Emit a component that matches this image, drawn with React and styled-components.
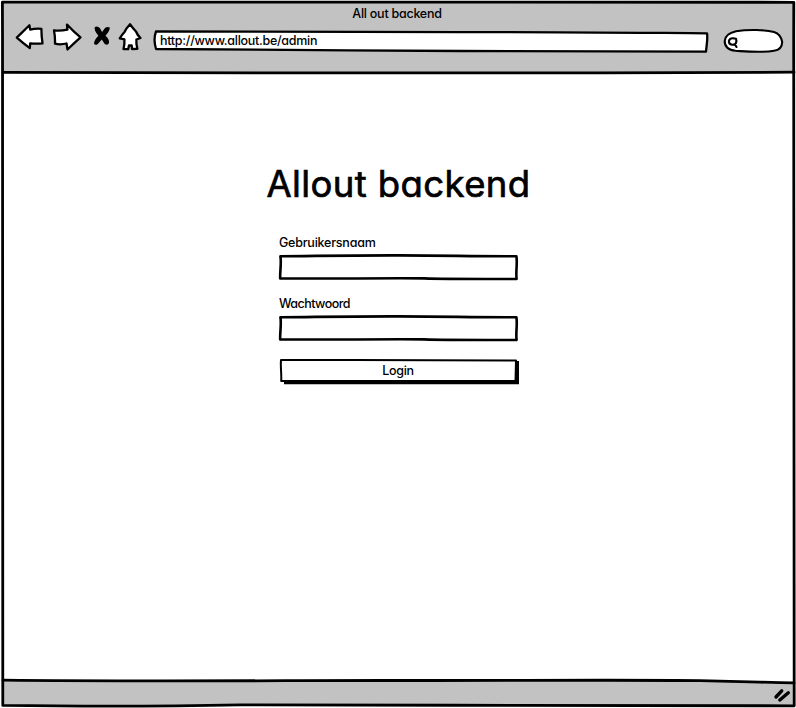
import React from "react";
import styled, { createGlobalStyle } from "styled-components";

const GlobalStyle = createGlobalStyle`
  * { box-sizing: border-box; }
  body { margin: 0; background: #fff; overflow: hidden; }
`;

const ink = "#000";
const chrome = "#c2c2c2";

const Window = styled.div`
  position: relative;
  width: 796px;
  height: 708px;
  display: grid;
  grid-template-rows: 72px 1fr 27px;
  padding: 1px 2px 2px 2px;
  background: #fff;
  color: ${ink};
  font: 500 12.5px/16px Inter, "Open Sans", sans-serif;
  font-feature-settings: "cv11", "ss03";
`;

/* Hand-drawn outline laid over the element that it frames */
const Outline = styled.svg`
  position: absolute;
  inset: 0;
  width: 100%;
  height: 100%;
  overflow: visible;
  pointer-events: none;
  fill: ${(p) => p.$fill || "none"};
  stroke: ${ink};
  stroke-width: ${(p) => p.$weight || 2.6};
  stroke-linejoin: round;
  stroke-linecap: round;
`;

const Header = styled.header`
  background: ${chrome};
  display: grid;
  grid-template-rows: 20px 1fr;
`;

const WindowTitle = styled.div`
  text-align: center;
  padding-top: 5px;
  padding-right: 2px;
  letter-spacing: -0.25px;
`;

const Toolbar = styled.div`
  display: flex;
  align-items: flex-start;
  padding-left: 12px;
`;

const NavButton = styled.button`
  all: unset;
  box-sizing: border-box;
  width: ${(p) => p.$width}px;
  height: 32px;
  margin-right: ${(p) => p.$gap}px;
`;

const Glyph = styled.svg`
  display: block;
  width: 100%;
  height: 100%;
  fill: #fff;
  stroke: ${ink};
  stroke-width: 2.3;
  stroke-linejoin: round;
  stroke-linecap: round;
`;

const AddressBar = styled.div`
  position: relative;
  width: 555px;
  height: 22px;
  margin-top: 9px;
  padding: 3px 0 0 7px;
`;

const AddressText = styled.span`
  position: relative;
  display: block;
  letter-spacing: -0.28px;
`;

const SearchBox = styled.div`
  position: relative;
  width: 61px;
  height: 24px;
  margin: 8px 0 0 15px;
`;

const Page = styled.main`
  display: flex;
  flex-direction: column;
  align-items: center;
  padding-top: 85px;
`;

const Heading = styled.h1`
  margin: 0;
  padding-left: 1px;
  font-size: 36.5px;
  line-height: 52px;
  font-weight: 400;
  letter-spacing: 0.4px;
  white-space: nowrap;
  -webkit-text-stroke: 0.7px ${ink};
`;

const Form = styled.form`
  width: 238px;
  padding-top: 25px;
  display: flex;
  flex-direction: column;
`;

const Field = styled.label`
  display: flex;
  flex-direction: column;
  height: 61px;
`;

const FieldName = styled.span`
  height: 19px;
  letter-spacing: ${(p) => p.$spacing};
`;

const InputFrame = styled.span`
  position: relative;
  display: block;
  height: 26px;
`;

const Input = styled.input`
  width: 100%;
  height: 100%;
  padding: 0 6px;
  border: 0;
  outline: 0;
  background: transparent;
  font: inherit;
`;

const LoginButton = styled.button`
  all: unset;
  position: relative;
  display: flex;
  justify-content: center;
  height: 26px;
  margin-top: 1px;
  padding-top: 5px;
  box-sizing: border-box;
  line-height: 16px;
  letter-spacing: -0.3px;
`;

const ButtonText = styled.span`
  position: relative;
`;

/* The top edge dips towards the right, as the line drawn along it does */
const Footer = styled.footer`
  background: ${chrome};
  clip-path: polygon(0 1px, 88% 1px, 100% 4px, 100% 100%, 0 100%);
  display: flex;
  justify-content: flex-end;
  padding: 9px 3px 0 0;
`;

const Grip = styled.svg`
  width: 18px;
  height: 16px;
  stroke: ${ink};
  stroke-width: 3.4;
  stroke-linecap: round;
  fill: none;
`;

function TextField({ name, label, spacing, type }) {
  return (
    <Field>
      <FieldName $spacing={spacing}>{label}</FieldName>
      <InputFrame>
        <Input name={name} type={type} />
        <Outline viewBox="0 0 238 26" $weight={2.6}>
          <path d="M1.4 2.3 C40 2 65 1.3 120 1.4 S190 2.5 237.4 2.3 C238.6 10 236.6 17 237.6 25 C190 25 170 25.2 145 24.4 C100 24 45 25 1.2 24.4 C.8 18 2.6 9 1.4 2.3Z" />
        </Outline>
      </InputFrame>
    </Field>
  );
}

export default function App() {
  return (
    <>
      <GlobalStyle />
      <Window>
        <Header>
          <WindowTitle>All out backend</WindowTitle>
          <Toolbar>
            <NavButton $width={30} $gap={8} aria-label="Back">
              <Glyph viewBox="14 21 30 32">
                <path d="M16.8 37.6 L29.4 25.2 L30.2 29.6 Q35 28.4 41.4 28.8 Q41.4 36 42.5 43.4 Q36 44 30.2 43.4 L29.8 48.2 Q23 43 16.8 37.6Z" />
              </Glyph>
            </NavButton>
            <NavButton $width={30} $gap={10} aria-label="Forward">
              <Glyph viewBox="52 21 30 32">
                <path d="M54 30.4 Q60 31.3 67.4 29.7 L67 24.6 Q73 31.3 80.5 37.3 Q73.4 43.7 67.5 49.5 L66.5 43.5 Q60 45 55 43.6 Q55.2 36.5 54 30.4Z" />
              </Glyph>
            </NavButton>
            <NavButton $width={20} $gap={6} aria-label="Stop">
              <Glyph viewBox="92 21 20 32">
                <path fill={ink} stroke="none" d="M94.8 27 Q97.5 25.5 99.8 28 L102.1 32 L105 28 Q107.5 26 109.8 27.6 Q110 31 105.5 35.7 Q109.5 39 109 43 Q107.5 46 104.5 43.7 L101.8 39.6 L97.8 44 Q95.5 45.8 94 43.8 Q94 40 98.4 35.7 Q93.8 30.5 94.8 27Z" />
              </Glyph>
            </NavButton>
            <NavButton $width={26} $gap={9} aria-label="Home">
              <Glyph viewBox="118 21 26 32">
                <path d="M130 24.2 Q126 28.5 124.5 32 Q121.7 35 119.8 38.4 L124.4 39.3 Q124.8 44 123.5 49 L128.2 49.2 L129 45.5 L131.7 45.5 L132 49 L137.4 48.8 Q136 44 136.4 39.5 L140.5 38 Q137.3 35 136 31.5 Q132.5 28 130 24.2Z" />
              </Glyph>
            </NavButton>
            <AddressBar>
              <Outline viewBox="153 30 555 22" $fill="#fff" $weight={2.3}>
                <path d="M156 31.5 C300 31.4 380 32 460 32.1 C540 31.7 630 32.7 707 33.3 C708 39 706.5 45 706 51.6 L460 51 C360 50.5 240 49.7 156 49 C154.2 43 154.3 36 156 31.5Z" />
              </Outline>
              <AddressText>http://www.allout.be/admin</AddressText>
            </AddressBar>
            <SearchBox>
              <Outline viewBox="723 29 61 24" $fill="#fff" $weight={2.1}>
                <path d="M735.5 50.8 C727 50 724.7 46 724.7 41 C725 36 729 32.8 736 31.2 C748 29.3 766 29.7 774 32 C780 34 781.5 38 782.2 42 C782 49 778 50.3 774 50.7 C762 53 747 51.5 735.5 50.8Z" />
                <path d="M728.9 41 Q729.6 38 733 38.2 L736 38.8 Q736.8 40.6 736 43 Q735 44.8 732 44.8 Q728.6 44 728.9 41Z M734.9 44.4 L736.5 47" />
              </Outline>
            </SearchBox>
          </Toolbar>
        </Header>
        <Page>
          <Heading>Allout backend</Heading>
          <Form onSubmit={(e) => e.preventDefault()}>
            <TextField name="user" type="text" label="Gebruikersnaam" spacing="-0.22px" />
            <TextField name="password" type="password" label="Wachtwoord" spacing="-0.55px" />
            <LoginButton>
              <Outline viewBox="0 0 238 26" $weight={2}>
                <path fill={ink} stroke="none" d="M5 23 L236 22 L235.5 3 L240 3 L240 26.3 L5 26.3Z" />
                <path fill="#fff" d="M2 2 C80 1.6 140 2.6 237 2.4 L236.5 23 C160 23.5 80 22.6 2.2 23 C2.7 15 1.3 9 2 2Z" />
              </Outline>
              <ButtonText>Login</ButtonText>
            </LoginButton>
          </Form>
        </Page>
        <Footer>
          <Grip viewBox="773 688 18 16">
            <path d="M776 697 L781.7 690.8 M779.8 700 L788.3 692.8" />
          </Grip>
        </Footer>
        <Outline viewBox="0 0 796 708" $weight={2.8}>
          <path d="M2.4 2.2 C200 2.8 500 1.8 793.8 2.3 C793 250 794.5 500 794.2 705.8 C650 706.7 420 704.6 240 704.8 C160 706.5 80 706.4 2.8 705.4 C1 500 3.4 250 2.4 2.2Z" />
          <path d="M3 72.3 C160 73.6 480 72.2 600 72.9 L794 72.2" />
          <path d="M3 680.2 C150 681.8 300 680.3 400 680.5 S640 679.6 700 680.7 S770 682.8 794 682.8" />
        </Outline>
      </Window>
    </>
  );
}
